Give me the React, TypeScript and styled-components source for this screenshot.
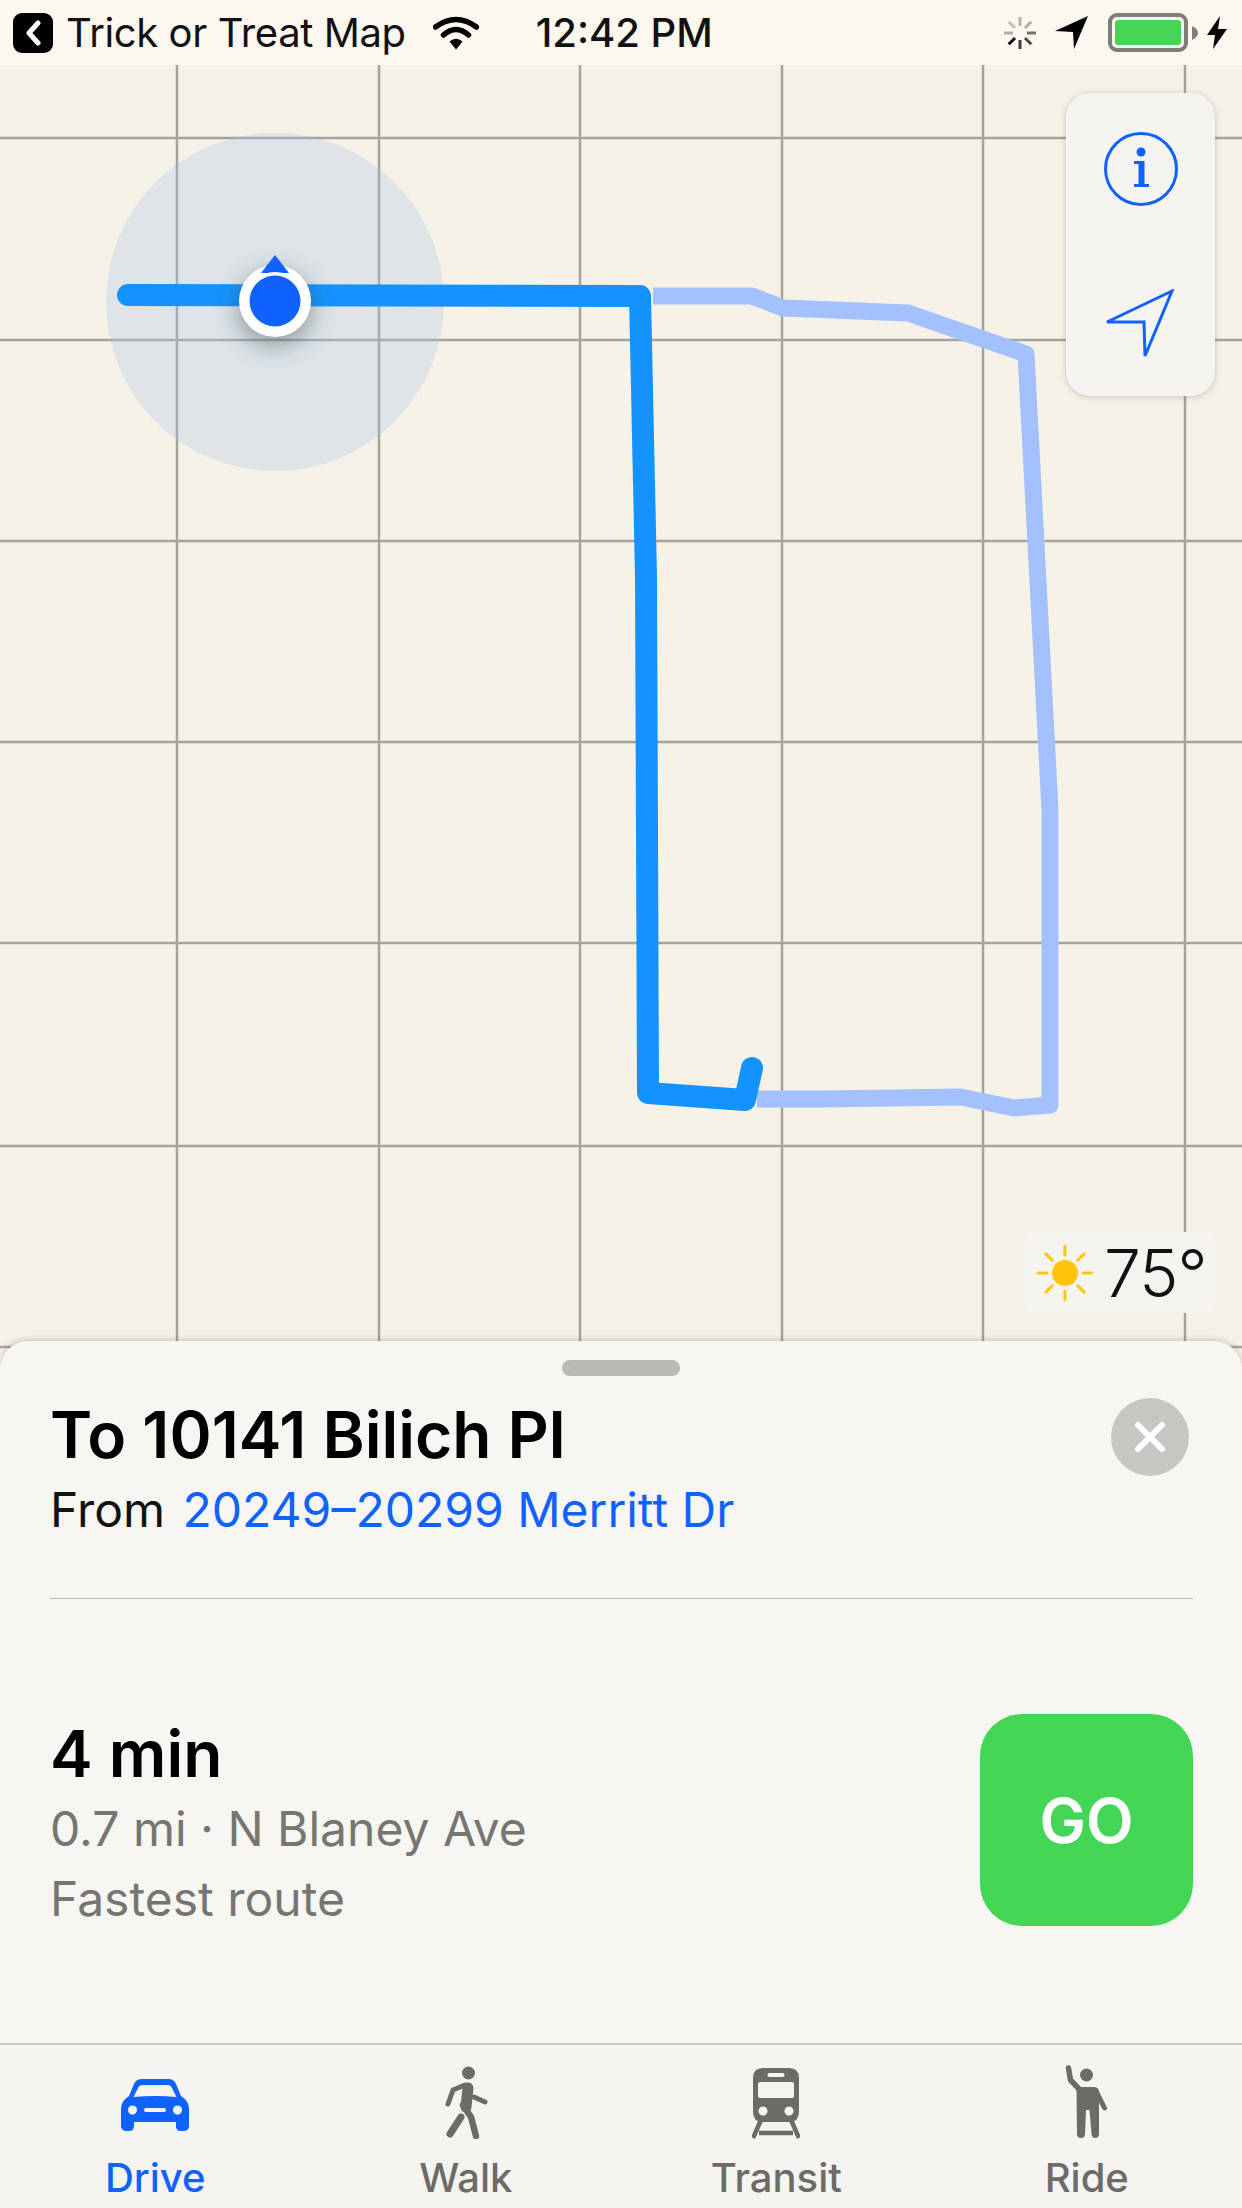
import React from 'react';
import styled, { createGlobalStyle } from 'styled-components';

const FONT = `Inter, "Liberation Sans", sans-serif`;
const BLUE = '#0f62fe';
const GREY = '#6c6b68';

const GlobalStyle = createGlobalStyle`
    html, body {
        margin: 0;
        padding: 0;
        background: #f6f2e8;
    }
    * {
        box-sizing: border-box;
    }
`;

const Screen = styled.div`
    width: 1242px;
    height: 2208px;
    display: flex;
    flex-direction: column;
    overflow: hidden;
    font-family: ${FONT};
    background: #f6f2e8;
`;

const StatusBar = styled.div`
    height: 65px;
    flex: none;
    display: flex;
    align-items: center;
    padding: 0 15px 0 13px;
    background: #fcf8ef;
    color: #111;
`;

const BackButton = styled.div`
    width: 40px;
    height: 40px;
    border-radius: 9px;
    background: #000;
    display: flex;
    align-items: center;
    justify-content: center;
    margin-right: 13px;
`;

const AppName = styled.div`
    font-size: 40px;
    letter-spacing: -0.4px;
    white-space: nowrap;
    margin-right: 27px;
`;

const Clock = styled.div`
    font-size: 40px;
    font-weight: 500;
    white-space: nowrap;
    margin-left: 57px;
`;

const StatusRight = styled.div`
    margin-left: auto;
    display: flex;
    align-items: center;
`;

const Battery = styled.div`
    width: 80px;
    height: 39px;
    border: 4px solid #7d7d7a;
    border-radius: 9px;
    padding: 3px;
    margin: 0 4px 0 19px;
    background: #fcf8ef;
`;

const BatteryFill = styled.div`
    height: 100%;
    border-radius: 3px;
    background: #43d655;
`;

const MapArea = styled.div`
    position: relative;
    flex: 1;
    margin-bottom: -30px;
    min-height: 0;
`;

const MapCanvas = styled.svg`
    position: absolute;
    left: 0;
    top: 0;
    width: 1242px;
    height: 1306px;
`;

const ControlPanel = styled.div`
    position: absolute;
    top: 28px;
    right: 27px;
    width: 149px;
    height: 303px;
    border-radius: 24px;
    background: #f5f4f1;
    box-shadow: 0 1px 6px rgba(90, 80, 60, 0.28);
    display: flex;
    flex-direction: column;
`;

const ControlButton = styled.div`
    flex: 1;
    display: flex;
    align-items: center;
    justify-content: center;
`;

const WeatherBadge = styled.div`
    position: absolute;
    top: 1167px;
    right: 27px;
    width: 191px;
    height: 81px;
    border-radius: 14px;
    background: #f5f4f0;
    display: flex;
    align-items: center;
    padding-left: 13px;
    gap: 11px;
`;

const Temperature = styled.div`
    font-size: 66px;
    font-weight: 300;
    letter-spacing: -1px;
    color: #111;
`;

const Sheet = styled.div`
    position: relative;
    flex: none;
    height: 867px;
    border-radius: 28px 28px 0 0;
    background: #f7f6f3;
    box-shadow: 0 -1px 6px rgba(90, 80, 60, 0.3);
    display: flex;
    flex-direction: column;
`;

const Handle = styled.div`
    width: 118px;
    height: 16px;
    border-radius: 8px;
    background: #b9bab5;
    margin: 19px auto 0;
`;

const SheetBody = styled.div`
    flex: 1;
    padding: 0 49px 0 50px;
`;

const HeaderRow = styled.div`
    display: flex;
    justify-content: space-between;
    height: 223px;
    padding-top: 23px;
    border-bottom: 1px solid #b9b9b6;
`;

const Title = styled.div`
    font-size: 64px;
    line-height: 72px;
    font-weight: 600;
    color: #000;
`;

const Subtitle = styled.div`
    font-size: 48px;
    line-height: 54px;
    margin-top: 12px;
    color: #111;
    white-space: nowrap;
`;

const Link = styled.span`
    color: ${BLUE};
    margin-left: 4px;
`;

const CloseButton = styled.div`
    width: 78px;
    height: 78px;
    border-radius: 50%;
    background: #c6c6c3;
    margin: -1px 4px 0 0;
    display: flex;
    align-items: center;
    justify-content: center;
`;

const RouteRow = styled.div`
    display: flex;
    justify-content: space-between;
    align-items: flex-start;
    padding-top: 115px;
`;

const Duration = styled.div`
    font-size: 64px;
    line-height: 70px;
    font-weight: 600;
    margin: 5px 0;
    color: #000;
`;

const RouteDetail = styled.div`
    font-size: 48px;
    line-height: 70px;
    color: #757572;
    white-space: nowrap;
`;

const GoButton = styled.div`
    width: 213px;
    height: 212px;
    border-radius: 42px;
    background: #43d655;
    color: #fff;
    font-size: 62px;
    font-weight: 600;
    display: flex;
    align-items: center;
    justify-content: center;
`;

const TabBar = styled.div`
    flex: none;
    height: 165px;
    border-top: 2px solid #c9c8c2;
    display: grid;
    grid-template-columns: repeat(4, 1fr);
    background: #f5f4f1;
`;

const Tab = styled.div<{ $active?: boolean }>`
    display: flex;
    flex-direction: column;
    align-items: center;
    color: ${(p) => (p.$active ? BLUE : GREY)};
`;

const TabIcon = styled.div<{ $lift?: number }>`
    height: 110px;
    display: flex;
    align-items: flex-end;
    padding-bottom: ${(p) => p.$lift ?? 16}px;
`;

const TabLabel = styled.div`
    font-size: 40px;
    line-height: 46px;
    font-weight: 500;
`;

const GRID_X = [177, 379, 580, 782, 983, 1185];
const GRID_Y = [73, 275, 476, 677, 878, 1081, 1282];

const ChevronLeft = () => (
    <svg width="18" height="26" viewBox="0 0 18 26">
        <path d="M14 3 L5 13 L14 23" fill="none" stroke="#fff" strokeWidth="5" strokeLinecap="round" strokeLinejoin="round" />
    </svg>
);

const WifiIcon = () => (
    <svg width="46" height="34" viewBox="0 0 46 34">
        <path d="M2.5 11 Q23 -4 43.5 11" fill="none" stroke="#000" strokeWidth="5.5" strokeLinecap="round" />
        <path d="M10.5 19 Q23 8 35.5 19" fill="none" stroke="#000" strokeWidth="5.5" strokeLinecap="round" />
        <path d="M16.5 25.5 Q23 20 29.5 25.5 L23 33.5 Z" fill="#000" />
    </svg>
);

const SPOKES = [
    { angle: 0, opacity: 0.28 },
    { angle: 45, opacity: 0.3 },
    { angle: 90, opacity: 0.55 },
    { angle: 135, opacity: 0.7 },
    { angle: 180, opacity: 0.75 },
    { angle: 225, opacity: 0.95 },
    { angle: 270, opacity: 0.3 },
    { angle: 315, opacity: 0.22 },
];

const Spinner = () => (
    <svg width="34" height="34" viewBox="-17 -17 34 34">
        {SPOKES.map((s) => (
            <line
                key={s.angle}
                x1="0"
                y1="-7"
                x2="0"
                y2="-16"
                stroke="#000"
                strokeOpacity={s.opacity}
                strokeWidth="3"
                transform={`rotate(${s.angle})`}
            />
        ))}
    </svg>
);

const LocationArrow = () => (
    <svg width="34" height="33" viewBox="0 0 34 33" style={{ marginLeft: 18 }}>
        <path d="M33 0 L0 15 L18 16 L19 33 Z" fill="#000" />
    </svg>
);

const BatteryNub = () => (
    <svg width="6" height="14" viewBox="0 0 6 14">
        <path d="M0 0 Q6 3 6 7 Q6 11 0 14 Z" fill="#7d7d7a" />
    </svg>
);

const ChargeBolt = () => (
    <svg width="20" height="33" viewBox="0 0 20 33" style={{ marginLeft: 9 }}>
        <path d="M13 0 L0 19 L8 19 L6 33 L20 13 L11 13 Z" fill="#000" />
    </svg>
);

const InfoIcon = () => (
    <svg width="76" height="76" viewBox="0 0 76 76">
        <circle cx="38" cy="38" r="35.5" fill="none" stroke={BLUE} strokeWidth="3" />
        <circle cx="38" cy="21" r="4.5" fill={BLUE} />
        <path d="M31 30 H41.5 V53 H46 V56 H31 V53 H35.5 V33 H31 Z" fill={BLUE} />
    </svg>
);

const NavigateIcon = () => (
    <svg width="70" height="70" viewBox="0 0 70 70" style={{ margin: '7px 4px 0 0' }}>
        <path d="M68 2 L3 33 L40 33 L41 67 Z" fill="none" stroke={BLUE} strokeWidth="3" strokeLinejoin="miter" />
    </svg>
);

const SunIcon = () => (
    <svg width="56" height="56" viewBox="-28 -28 56 56">
        <circle r="13" fill="#ffc50d" />
        {[0, 45, 90, 135, 180, 225, 270, 315].map((a) => (
            <line key={a} x1="0" y1="-18" x2="0" y2="-27" stroke="#ffc50d" strokeWidth="3" strokeLinecap="round" transform={`rotate(${a})`} />
        ))}
    </svg>
);

const CloseIcon = () => (
    <svg width="34" height="34" viewBox="0 0 34 34">
        <path d="M5 5 L29 29 M29 5 L5 29" fill="none" stroke="#fff" strokeWidth="6" strokeLinecap="round" />
    </svg>
);

const CarIcon = () => (
    <svg width="68" height="52" viewBox="0 0 68 52">
        <path
            fillRule="evenodd"
            fill="currentColor"
            d="M21 0 H47 Q53 0 55 5 L60 17 Q68 22 68 30 V47 Q68 52 62 52 H60 Q55 52 55 47 V43 H13 V47 Q13 52 8 52 H6 Q0 52 0 47 V30 Q0 22 8 17 L13 5 Q15 0 21 0 Z
               M22 6 Q18 6 17 9 L12.5 18 Q34 16 55.5 18 L51 9 Q50 6 46 6 Z
               M11.5 26.5 a4.5 4.5 0 1 0 0.01 0 Z
               M56.5 26.5 a4.5 4.5 0 1 0 0.01 0 Z
               M25 29 H43 Q45 29 45 31 Q45 33 43 33 H25 Q23 33 23 31 Q23 29 25 29 Z"
        />
    </svg>
);

const WalkIcon = () => (
    <svg width="46" height="74" viewBox="0 0 46 74">
        <circle cx="25.5" cy="8" r="6.5" fill="currentColor" />
        <g fill="none" stroke="currentColor" strokeLinecap="round" strokeLinejoin="round">
            <path d="M25 23 L23 42" strokeWidth="11" />
            <path d="M20 40 L28 52 L33 71" strokeWidth="6.5" />
            <path d="M18 52 L7 69" strokeWidth="7" />
            <path d="M22 20 L10 25 L5 39" strokeWidth="5" />
            <path d="M31 32 L42 37" strokeWidth="5" />
        </g>
    </svg>
);

const TrainIcon = () => (
    <svg width="48" height="71" viewBox="0 0 48 71">
        <path
            fillRule="evenodd"
            fill="currentColor"
            d="M11 0 H37 Q47 0 47 10 V44 Q47 54 37 54 H11 Q1 54 1 44 V10 Q1 0 11 0 Z
               M17 5 Q15.5 5 15.5 7 Q15.5 9 17 9 H31 Q32.5 9 32.5 7 Q32.5 5 31 5 Z
               M8 14 Q6 14 6 16 V28 Q6 30 8 30 H40 Q42 30 42 28 V16 Q42 14 40 14 Z
               M11 38.5 a4.5 4.5 0 1 0 0.01 0 Z
               M37 38.5 a4.5 4.5 0 1 0 0.01 0 Z"
        />
        <path d="M9 52 L1 70 M39 52 L47 70 M7 65 H41" fill="none" stroke="currentColor" strokeWidth="4.5" />
    </svg>
);

const RideIcon = () => (
    <svg width="44" height="74" viewBox="0 0 44 74">
        <circle cx="21.5" cy="10" r="6.5" fill="currentColor" />
        <g fill="none" stroke="currentColor" strokeLinecap="round" strokeLinejoin="round">
            <path d="M3.5 3 L5.5 15 L14 24" strokeWidth="5.5" />
            <path d="M31 26 L39.5 43" strokeWidth="5" />
        </g>
        <path
            fill="currentColor"
            d="M11.5 24 Q12 22 15 22 H29 Q33 22 34 26 V40 L34 69 Q34 73 30 73 Q27 73 26.5 69 L24.5 45 H21 L20 69 Q20 73 16 73 Q12 73 12 69 Z"
        />
    </svg>
);

const UserDot = () => (
    <g>
        <defs>
            <filter id="dotShadow" x="-100%" y="-100%" width="300%" height="300%">
                <feGaussianBlur stdDeviation="12" />
            </filter>
        </defs>
        <circle cx="275" cy="244" r="38" fill="#40454a" fillOpacity="0.45" filter="url(#dotShadow)" />
        <circle cx="275" cy="236" r="36" fill="#fff" />
        <path d="M275 190 L289 208 L261 208 Z" fill={BLUE} />
        <circle cx="275" cy="236" r="29" fill="#fff" />
        <circle cx="275" cy="236" r="25.5" fill={BLUE} />
    </g>
);

export default function App() {
    return (
        <Screen>
            <GlobalStyle />
            <StatusBar>
                <BackButton>
                    <ChevronLeft />
                </BackButton>
                <AppName>Trick or Treat Map</AppName>
                <WifiIcon />
                <Clock>12:42 PM</Clock>
                <StatusRight>
                    <Spinner />
                    <LocationArrow />
                    <Battery>
                        <BatteryFill />
                    </Battery>
                    <BatteryNub />
                    <ChargeBolt />
                </StatusRight>
            </StatusBar>
            <MapArea>
                <MapCanvas viewBox="0 0 1242 1306">
                    {GRID_X.map((x) => (
                        <line key={x} x1={x} y1="0" x2={x} y2="1306" stroke="#a5a39c" strokeWidth="2.5" />
                    ))}
                    {GRID_Y.map((y) => (
                        <line key={y} x1="0" y1={y} x2="1242" y2={y} stroke="#a5a39c" strokeWidth="2.5" />
                    ))}
                    <circle cx="275" cy="237" r="169" fill="#a6c3e8" fillOpacity="0.3" />
                    <path
                        d="M653 231 H752 L783 243 L908 248 L1026 289 L1050 745 L1050 1040 L1014 1043 L961 1032 L821 1034 L757 1034"
                        fill="none"
                        stroke="#a3c1ff"
                        strokeWidth="17"
                        strokeLinejoin="round"
                    />
                    <path
                        d="M128 230 L640 231 L646 512 L648 1028 L745 1035 L752 1003"
                        fill="none"
                        stroke="#1493ff"
                        strokeWidth="22"
                        strokeLinecap="round"
                        strokeLinejoin="round"
                    />
                    <UserDot />
                </MapCanvas>
                <ControlPanel>
                    <ControlButton>
                        <InfoIcon />
                    </ControlButton>
                    <ControlButton>
                        <NavigateIcon />
                    </ControlButton>
                </ControlPanel>
                <WeatherBadge>
                    <SunIcon />
                    <Temperature>75°</Temperature>
                </WeatherBadge>
            </MapArea>
            <Sheet>
                <Handle />
                <SheetBody>
                    <HeaderRow>
                        <div>
                            <Title>To 10141 Bilich Pl</Title>
                            <Subtitle>
                                From <Link>20249–20299 Merritt Dr</Link>
                            </Subtitle>
                        </div>
                        <CloseButton>
                            <CloseIcon />
                        </CloseButton>
                    </HeaderRow>
                    <RouteRow>
                        <div>
                            <Duration>4 min</Duration>
                            <RouteDetail>0.7 mi · N Blaney Ave</RouteDetail>
                            <RouteDetail>Fastest route</RouteDetail>
                        </div>
                        <GoButton>GO</GoButton>
                    </RouteRow>
                </SheetBody>
                <TabBar>
                    <Tab $active>
                        <TabIcon $lift={24}>
                            <CarIcon />
                        </TabIcon>
                        <TabLabel>Drive</TabLabel>
                    </Tab>
                    <Tab>
                        <TabIcon>
                            <WalkIcon />
                        </TabIcon>
                        <TabLabel>Walk</TabLabel>
                    </Tab>
                    <Tab>
                        <TabIcon>
                            <TrainIcon />
                        </TabIcon>
                        <TabLabel>Transit</TabLabel>
                    </Tab>
                    <Tab>
                        <TabIcon>
                            <RideIcon />
                        </TabIcon>
                        <TabLabel>Ride</TabLabel>
                    </Tab>
                </TabBar>
            </Sheet>
        </Screen>
    );
}
